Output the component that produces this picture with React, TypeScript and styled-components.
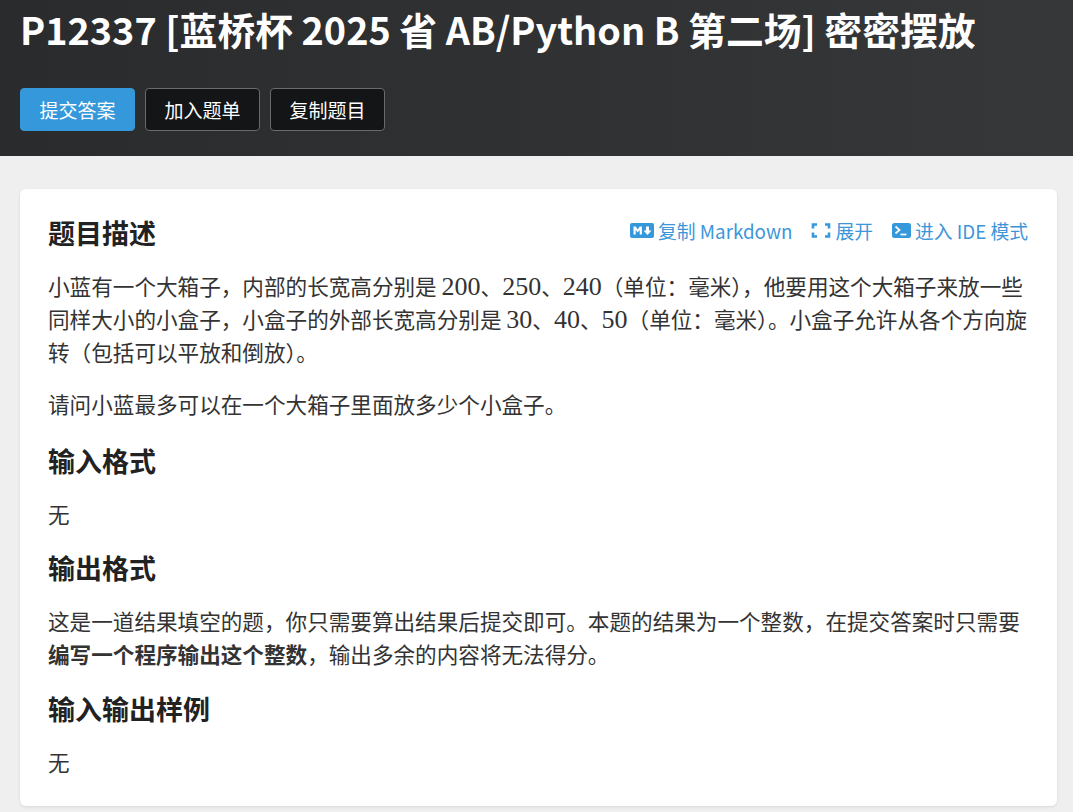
import React from "react";
import styled, { createGlobalStyle } from "styled-components";

const Global = createGlobalStyle`
  html, body { margin: 0; padding: 0; background: #efefef; }
  body { font-family: "Noto Sans CJK SC", "Noto Sans", sans-serif; color: #333; overflow: hidden; height: 812px; }
`;
const Header = styled.header`
  height: 156px; box-sizing: border-box; padding: 4px 20px 0;
  background: linear-gradient(90deg, #2a2b2d, #363738);
`;
const Title = styled.h1`
  margin: 0; font-size: 37.8px; line-height: 50px; font-weight: 700; color: #fff;
`;
const Actions = styled.div`display: flex; gap: 10px; margin-top: 34px;`;
const Button = styled.button<{ $primary?: boolean }>`
  height: 43px; box-sizing: border-box; padding: 0 18.5px; border-radius: 4px;
  font: 400 19px/1 "Noto Sans CJK SC", sans-serif; color: #fff;
  background: ${p => (p.$primary ? "#3498db" : "#141517")};
  border: 1px solid ${p => (p.$primary ? "#3498db" : "#6a6a6a")};
`;
const Main = styled.main`padding: 33px 16px 0 20px;`;
const Card = styled.section`
  background: #fff; border-radius: 6px; box-shadow: 0 1px 3px rgba(0,0,0,.1);
  padding: 20px 28px 11px; height: 617px; box-sizing: border-box;
`;
const TitleRow = styled.div`display: flex; justify-content: space-between; align-items: center;`;
const Heading = styled.h2`
  margin: 0; font-size: 27px; line-height: 48px; font-weight: 700; color: #222;
`;
const SectionHeading = styled(Heading)<{ $gap?: number }>`margin-top: ${p => p.$gap ?? 14.5}px;`;
const Tools = styled.div`
  display: flex; gap: 19px; color: #3d96d9; font-size: 18.8px; line-height: 45px;
  margin: -4.5px 1px 0 0;
`;
const Tool = styled.span`display: inline-flex; align-items: center; gap: 4px;`;
const Para = styled.p`
  margin: 12px 0 0; font-size: 21.6px; line-height: 33px; color: #333;
  & + & { margin-top: 19px; }
`;
const MathNum = styled.span`font-family: "Liberation Serif", serif; font-size: 26px; line-height: 1;`;

const MdIcon = () => (
  <svg width="24" height="15" viewBox="0 0 24 15" aria-hidden>
    <rect width="24" height="15" rx="2" fill="#3498db" />
    <path d="M3.500 11.500V3.500h2.200l2 3 2-3h2.200v8H9.700V7l-2 2.600L5.700 7v4.500zM16 3.500h3v4h2.500L17.500 12 13.500 7.500H16z" fill="#fff" />
  </svg>
);
const ExpandIcon = () => (
  <svg width="20" height="15" viewBox="0 0 20 15" aria-hidden>
    <path d="M2 5.500V1.500h4M14 1.500h4v4M18 9.500v4h-4M6 13.500H2v-4" fill="none" stroke="#3498db" strokeWidth="2.600" />
  </svg>
);
const TermIcon = () => (
  <svg width="19" height="15" viewBox="0 0 19 15" aria-hidden>
    <rect width="19" height="15" rx="2.500" fill="#3498db" />
    <path d="M3.500 3.500l4 3.500-4 3.500" fill="none" stroke="#fff" strokeWidth="1.700" />
    <path d="M8.500 11.500h6" stroke="#fff" strokeWidth="1.700" />
  </svg>
);

export default function App() {
  return (
    <>
      <Global />
      <Header>
        <Title>P12337 [蓝桥杯 2025 省 AB/Python B 第二场] 密密摆放</Title>
        <Actions>
          <Button $primary>提交答案</Button>
          <Button>加入题单</Button>
          <Button>复制题目</Button>
        </Actions>
      </Header>
      <Main>
        <Card>
          <TitleRow>
            <Heading>题目描述</Heading>
            <Tools>
              <Tool><MdIcon />复制 Markdown</Tool>
              <Tool><ExpandIcon />展开</Tool>
              <Tool><TermIcon />进入 IDE 模式</Tool>
            </Tools>
          </TitleRow>
          <Para>
            小蓝有一个大箱子，内部的长宽高分别是 <MathNum>200</MathNum>、<MathNum>250</MathNum>、<MathNum>240</MathNum>（单位：毫米），他要用这个大箱子来放一些同样大小的小盒子，小盒子的外部长宽高分别是 <MathNum>30</MathNum>、<MathNum>40</MathNum>、<MathNum>50</MathNum>（单位：毫米）。小盒子允许从各个方向旋转（包括可以平放和倒放）。
          </Para>
          <Para>请问小蓝最多可以在一个大箱子里面放多少个小盒子。</Para>
          <SectionHeading $gap={16.5}>输入格式</SectionHeading>
          <Para>无</Para>
          <SectionHeading>输出格式</SectionHeading>
          <Para>这是一道结果填空的题，你只需要算出结果后提交即可。本题的结果为一个整数，在提交答案时只需要<strong>编写一个程序输出这个整数</strong>，输出多余的内容将无法得分。</Para>
          <SectionHeading>输入输出样例</SectionHeading>
          <Para>无</Para>
        </Card>
      </Main>
    </>
  );
}
